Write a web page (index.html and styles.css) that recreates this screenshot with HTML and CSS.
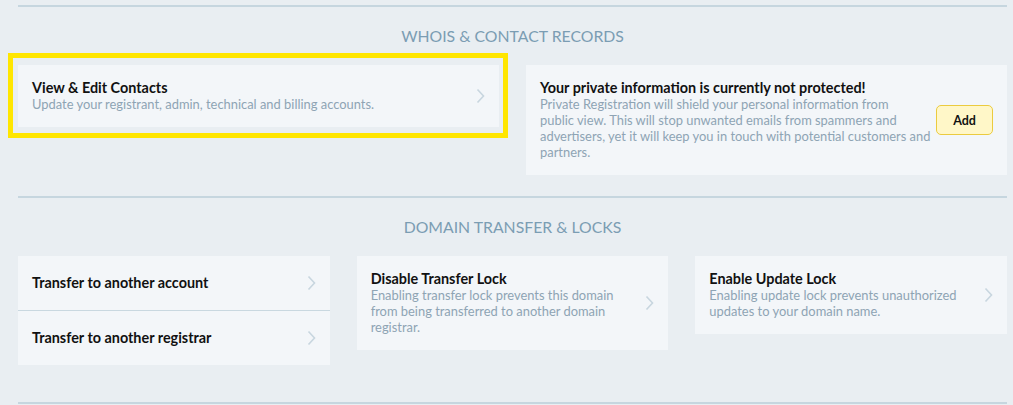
FILE: index.html
```html
<!DOCTYPE html>
<html>
<head>
<meta charset="utf-8">
<link rel="stylesheet" href="styles.css">
</head>
<body>
<div class="page">
  <section class="section">
    <h2 class="section-title">WHOIS &amp; CONTACT RECORDS</h2>
    <div class="grid grid-2">
      <div class="highlight-wrap">
        <div class="highlight"></div>
        <a class="card card-link">
          <div class="card-text">
            <div class="card-title">View &amp; Edit Contacts</div>
            <div class="card-desc">Update your registrant, admin, technical and billing accounts.</div>
          </div>
          <svg class="chev" width="9" height="16" viewBox="0 0 9 16"><path d="M1.5 1.5 L7.5 8 L1.5 14.5" fill="none" stroke="#c8d6df" stroke-width="1.6"/></svg>
        </a>
      </div>
      <div class="card card-notice">
        <div class="card-text">
          <div class="card-title">Your private information is currently not protected!</div>
          <div class="card-desc">Private Registration will shield your personal information from<br>public view. This will stop unwanted emails from spammers and<br>advertisers, yet it will keep you in touch with potential customers and<br>partners.</div>
        </div>
        <button class="btn-add">Add</button>
      </div>
    </div>
  </section>
  <section class="section section-last">
    <h2 class="section-title">DOMAIN TRANSFER &amp; LOCKS</h2>
    <div class="grid grid-3">
      <div class="card card-list">
        <a class="list-row">
          <span class="card-title">Transfer to another account</span>
          <svg class="chev" width="9" height="16" viewBox="0 0 9 16"><path d="M1.5 1.5 L7.5 8 L1.5 14.5" fill="none" stroke="#c8d6df" stroke-width="1.6"/></svg>
        </a>
        <a class="list-row">
          <span class="card-title">Transfer to another registrar</span>
          <svg class="chev" width="9" height="16" viewBox="0 0 9 16"><path d="M1.5 1.5 L7.5 8 L1.5 14.5" fill="none" stroke="#c8d6df" stroke-width="1.6"/></svg>
        </a>
      </div>
      <a class="card card-link">
        <div class="card-text">
          <div class="card-title">Disable Transfer Lock</div>
          <div class="card-desc">Enabling transfer lock prevents this domain from being transferred to another domain registrar.</div>
        </div>
        <svg class="chev" width="9" height="16" viewBox="0 0 9 16"><path d="M1.5 1.5 L7.5 8 L1.5 14.5" fill="none" stroke="#c8d6df" stroke-width="1.6"/></svg>
      </a>
      <a class="card card-link">
        <div class="card-text">
          <div class="card-title">Enable Update Lock</div>
          <div class="card-desc">Enabling update lock prevents unauthorized updates to your domain name.</div>
        </div>
        <svg class="chev" width="9" height="16" viewBox="0 0 9 16"><path d="M1.5 1.5 L7.5 8 L1.5 14.5" fill="none" stroke="#c8d6df" stroke-width="1.6"/></svg>
      </a>
    </div>
  </section>
  <div class="divider"></div>
</div>
</body>
</html>
```

FILE: styles.css
```css
* { box-sizing: border-box; }
html, body { margin: 0; padding: 0; }
body {
  background: #e9eef2;
  font-family: Lato, "Open Sans", Arial, sans-serif;
  font-size: 13px;
  line-height: 16px;
  color: #111;
}
.page {
  padding: 5px 6px 0 18px;
}
.section {
  border-top: 2px solid #c6d6df;
  padding-bottom: 21px;
}
.section-last {
  padding-bottom: 37px;
}
.divider {
  border-top: 2px solid #c6d6df;
}
.section-title {
  margin: 0;
  padding: 19px 0;
  font-size: 15.8px;
  line-height: 20px;
  font-weight: 400;
  text-align: center;
  color: #7b9db3;
}
.grid {
  display: grid;
  gap: 27px;
  align-items: start;
}
.grid-2 { grid-template-columns: 1fr 1fr; }
.grid-3 { grid-template-columns: 1fr 1fr 1fr; }
.card {
  background: #f3f6f9;
  display: flex;
  align-items: center;
}
.card-link {
  padding: 15px 14px;
  gap: 12px;
}
.card-text { flex: 1; min-width: 0; }
.card-title {
  font-weight: 700;
  color: #111;
  font-size: 14.4px;
  line-height: 16px;
}
.card-desc {
  color: #8ea4b4;
  font-size: 12.9px;
  line-height: 16px;
}
.chev { flex: none; display: block; }
.highlight-wrap {
  position: relative;
}
.highlight-wrap .card { position: relative; }
.highlight {
  position: absolute;
  left: -10px;
  top: -12px;
  right: -9px;
  bottom: -11px;
  border: 5px solid #ffe600;
}
.card-notice {
  padding: 15px 14px;
  gap: 0;
}
.card-notice .card-desc { white-space: nowrap; }
.btn-add {
  flex: none;
  width: 57px;
  height: 30px;
  background: #fff7c8;
  border: 1.5px solid #ebcb3f;
  border-radius: 5px;
  font-family: inherit;
  font-size: 12.5px;
  font-weight: 700;
  color: #111;
  padding: 0;
}
.card-list {
  flex-direction: column;
  align-items: stretch;
}
.list-row {
  display: flex;
  align-items: center;
  justify-content: space-between;
  height: 54px;
  padding: 0 14px;
}
.list-row + .list-row {
  border-top: 1px solid #c9d8e0;
  height: 55px;
}
```
